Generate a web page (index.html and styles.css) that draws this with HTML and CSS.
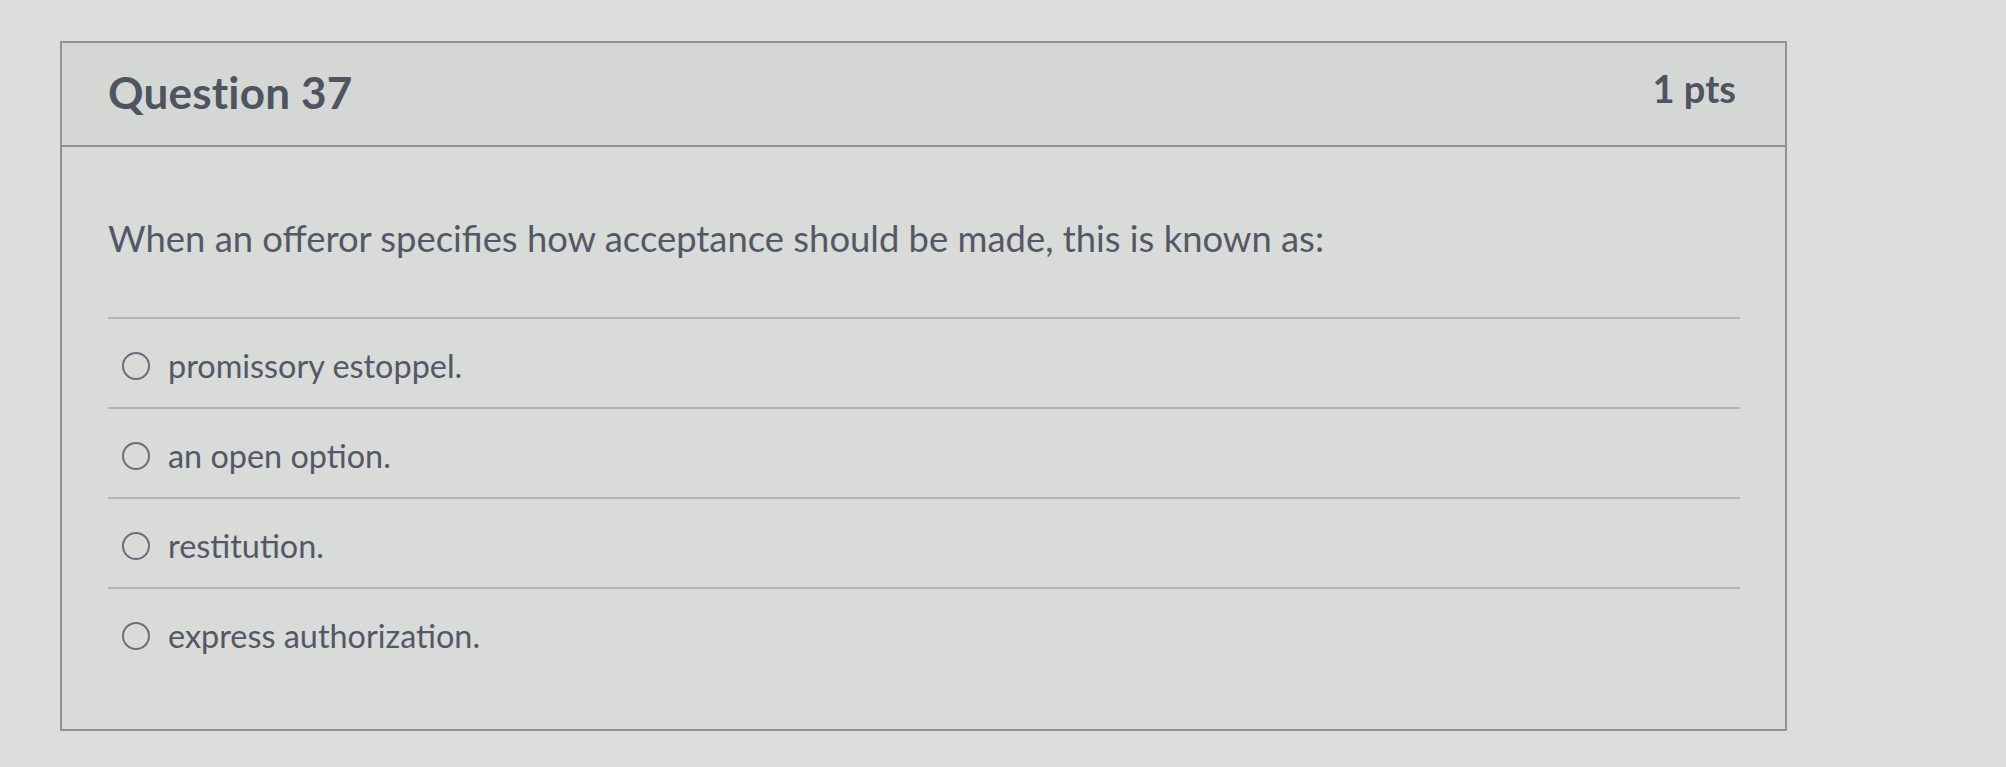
FILE: index.html
```html
<!DOCTYPE html>
<html lang="en">
<head>
<meta charset="utf-8">
<title>Question 37</title>
<link rel="stylesheet" href="styles.css">
</head>
<body>
<main class="page">
  <section class="question-card">
    <header class="question-header">
      <h2 class="question-title">Question 37</h2>
      <span class="question-points">1 pts</span>
    </header>
    <div class="question-body">
      <p class="question-text">When an offeror specifies how acceptance should be made, this is known as:</p>
      <ul class="answers">
        <li class="answer"><span class="radio"></span><span class="answer-label">promissory estoppel.</span></li>
        <li class="answer"><span class="radio"></span><span class="answer-label">an open option.</span></li>
        <li class="answer"><span class="radio"></span><span class="answer-label">restitution.</span></li>
        <li class="answer"><span class="radio"></span><span class="answer-label">express authorization.</span></li>
      </ul>
    </div>
  </section>
</main>
</body>
</html>
```

FILE: styles.css
```css
html, body {
  margin: 0;
  padding: 0;
}

body {
  background: #dcdedb;
  font-family: Lato, "Open Sans", "Liberation Sans", sans-serif;
  color: #535866;
  width: 2006px;
  height: 767px;
  overflow: hidden;
}

.page {
  padding: 41px 0 0 60px;
}

.question-card {
  width: 1727px;
  border: 2px solid #8f9298;
  background: #d9dbd8;
  box-sizing: border-box;
}

.question-header {
  height: 104px;
  box-sizing: border-box;
  display: flex;
  align-items: center;
  justify-content: space-between;
  padding: 0 49px 0 46px;
  background: #d5d7d4;
  border-bottom: 2px solid #8f9298;
}

.question-title {
  margin: 0;
  font-size: 44px;
  font-weight: 700;
  color: #4f5461;
  letter-spacing: 0.2px;
  margin-top: -4px;
}

.question-points {
  font-size: 38px;
  font-weight: 700;
  color: #4f5461;
  margin-top: -12px;
}

.question-body {
  padding: 70px 45px 52px 46px;
}

.question-text {
  margin: 0 0 58px 0;
  font-size: 36.4px;
  line-height: 42px;
}

.answers {
  list-style: none;
  margin: 0;
  padding: 0;
}

.answer {
  display: flex;
  align-items: center;
  height: 90px;
  box-sizing: border-box;
  border-top: 2px solid #b3b6b9;
  padding: 5px 0 0 14px;
}

.radio {
  width: 24px;
  height: 24px;
  border: 2px solid #6a6f79;
  border-radius: 50%;
  flex: none;
}

.answer-label {
  margin-left: 18px;
  font-size: 32.4px;
  line-height: 40px;
}
```
